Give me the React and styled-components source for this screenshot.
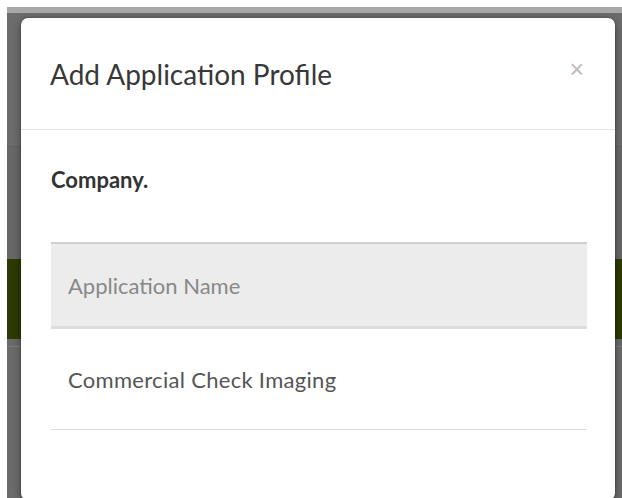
import React from 'react';
import styled, { createGlobalStyle } from 'styled-components';

const GlobalStyle = createGlobalStyle`
  html, body {
    margin: 0;
    padding: 0;
    background: #fff;
  }
  body {
    font-family: 'Lato', 'Open Sans', sans-serif;
  }
`;

// Dimmed page behind the dialog
const Backdrop = styled.div`
  position: relative;
  margin: 7px 0 0 7px;
  width: 615px;
  height: 491px;
  display: flex;
  flex-direction: column;
  overflow: hidden;
  background: #6b6b6b;
`;

const Band = styled.div`
  height: ${p => p.h}px;
  background: ${p => p.bg};
  border-bottom: ${p => (p.line ? `1px solid ${p.line}` : 'none')};
  flex-shrink: 0;
`;

const Dialog = styled.div`
  position: absolute;
  left: 14px;
  top: 11px;
  width: 594px;
  height: 482px;
  background: #fff;
  border-radius: 7px;
  box-shadow: 0 0 2px rgba(0, 0, 0, 0.35), 0 3px 9px rgba(0, 0, 0, 0.4);
  display: flex;
  flex-direction: column;
`;

const Header = styled.div`
  height: 112px;
  padding: 0 31px 0 29px;
  display: flex;
  align-items: center;
  justify-content: space-between;
  border-bottom: 1px solid #e5e5e5;
  box-sizing: border-box;
`;

const Title = styled.h4`
  margin: 0;
  font-size: 28px;
  font-weight: 400;
  color: #383838;
`;

const Close = styled.button`
  border: 0;
  background: none;
  padding: 0;
  margin-top: -8px;
  font-family: 'Liberation Sans', sans-serif;
  font-size: 25px;
  line-height: 1;
  color: #bdbdbd;
  cursor: pointer;
`;

const Body = styled.div`
  padding: 36px 28px 0 30px;
`;

const Company = styled.div`
  font-size: 22px;
  font-weight: 700;
  color: #333;
  margin-bottom: 49px;
`;

const Table = styled.table`
  width: 100%;
  border-collapse: collapse;
  font-size: 22px;
`;

const Th = styled.th`
  text-align: left;
  font-weight: 400;
  color: #888;
  background: #ececec;
  border-top: 2px solid #cfcfcf;
  border-bottom: 3px solid #dedede;
  height: 82px;
  padding: 0 17px;
`;

const Td = styled.td`
  color: #555;
  letter-spacing: 0.3px;
  border-bottom: 1px solid #dddddd;
  height: 100px;
  padding: 0 17px;
`;

const rows = ['Commercial Check Imaging'];

export default function App() {
  return (
    <>
      <GlobalStyle />
      <Backdrop>
        <Band h={6} bg="#a8a8a8" />
        <Band h={133} bg="#6c6c6c" line="#626262" />
        <Band h={112} bg="#686868" />
        <Band h={80} bg="#2c3b03" />
        <Band h={7} bg="#6a6a6a" line="#7a7a7a" />
        <Band h={160} bg="#6b6b6b" />
        <Dialog>
          <Header>
            <Title>Add Application Profile</Title>
            <Close aria-label="Close">×</Close>
          </Header>
          <Body>
            <Company>Company.</Company>
            <Table>
              <thead>
                <tr>
                  <Th>Application Name</Th>
                </tr>
              </thead>
              <tbody>
                {rows.map(r => (
                  <tr key={r}>
                    <Td>{r}</Td>
                  </tr>
                ))}
              </tbody>
            </Table>
          </Body>
        </Dialog>
      </Backdrop>
    </>
  );
}
